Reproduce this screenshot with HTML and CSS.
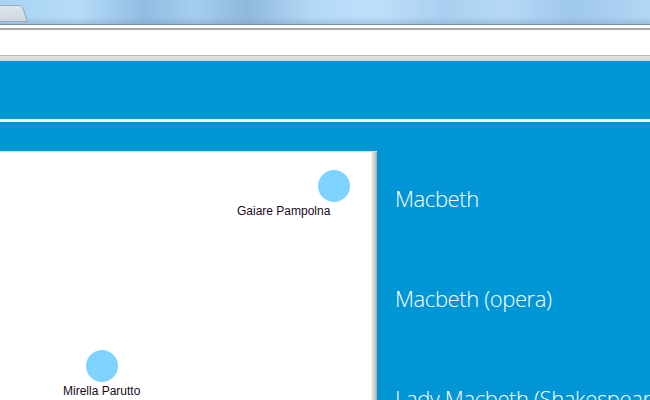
FILE: index.html
```html
<!DOCTYPE html>
<html>
<head>
<meta charset="utf-8">
<link rel="stylesheet" href="styles.css">
</head>
<body>
<div class="titlebar">
  <div class="tab"></div>
</div>
<div class="toolbar">
  <div class="toolbar-gap"></div>
  <div class="address"></div>
  <div class="toolbar-foot"></div>
</div>
<div class="header">
  <div class="header-top"></div>
  <div class="header-rule"></div>
  <div class="header-bottom"></div>
</div>
<div class="main">
  <div class="graph">
    <div class="node node-a"></div>
    <div class="label label-a">Gaiare Pampolna</div>
    <div class="node node-b"></div>
    <div class="label label-b">Mirella Parutto</div>
  </div>
  <ul class="list">
    <li class="item">Macbeth</li>
    <li class="item">Macbeth (opera)</li>
    <li class="item">Lady Macbeth (Shakespeare)</li>
  </ul>
</div>
</body>
</html>
```
FILE: styles.css
```css
html, body {
  margin: 0;
  padding: 0;
  width: 650px;
  height: 400px;
  overflow: hidden;
  background: #ffffff;
}
.titlebar {
  position: relative;
  height: 24px;
  border-bottom: 1px solid #7390b0;
  background:
    linear-gradient(to bottom, rgba(255,255,255,0) 0%, rgba(255,255,255,0) 70%, rgba(120,150,185,0.35) 100%),
    linear-gradient(to right, #a7d2f3 0%, #b6dcf8 12%, #92bde2 22%, #a5cdef 30%, #8fb8dc 38%, #b3d9f7 48%, #bfe0fb 58%, #a9cff0 68%, #b5d8f6 78%, #9fc8ec 88%, #b2d6f4 100%);
}
.tab {
  position: absolute;
  left: -4px;
  top: 5px;
  width: 30px;
  height: 15px;
  background: linear-gradient(to bottom, #dfe5eb, #cdd5de);
  border: 1px solid #97a9bd;
  border-radius: 3px 4px 0 0;
  transform: skewX(18deg);
  transform-origin: bottom left;
}
.toolbar-gap {
  height: 3px;
  background: #ffffff;
  border-bottom: 2px solid #a8a8a8;
}
.address {
  height: 25px;
  background: #ffffff;
  border-bottom: 1px solid #b8b8b8;
}
.toolbar-foot {
  height: 5px;
  background: linear-gradient(to bottom, #e4e4e4, #d8d8d8);
}
.header-top {
  height: 58px;
  background: #0096d6;
}
.header-rule {
  height: 3px;
  background: #ffffff;
}
.header-bottom {
  height: 29px;
  background: #0096d6;
}
.main {
  display: flex;
  height: 249px;
  background: #0096d6;
}
.graph {
  position: relative;
  flex: 0 0 377px;
  height: 100%;
  box-sizing: border-box;
  border-top: 1px solid #dcdcdc;
  background: linear-gradient(to right, #ffffff 0, #ffffff 371px, #e6e6e6 372px, #c8c8c8 375px, #a9a9a9 377px);
}
.node {
  position: absolute;
  width: 32px;
  height: 32px;
  border-radius: 50%;
  background: #7fd4ff;
}
.node-a { left: 318px; top: 18px; }
.node-b { left: 86px; top: 198px; }
.label {
  position: absolute;
  font-family: "Liberation Sans", Arial, sans-serif;
  font-size: 12px;
  line-height: 14px;
  color: #1a0a1a;
  white-space: nowrap;
}
.label-a { left: 237px; top: 52px; }
.label-b { left: 63px; top: 232px; }
.list {
  list-style: none;
  margin: 0;
  padding: 0 0 0 18px;
  flex: 1;
  overflow: hidden;
}
.item {
  font-family: "Open Sans", sans-serif;
  font-weight: 300;
  font-size: 22px;
  letter-spacing: -0.4px;
  line-height: 30px;
  color: #ffffff;
  white-space: nowrap;
  padding-top: 32px;
  height: 68px;
}
```
